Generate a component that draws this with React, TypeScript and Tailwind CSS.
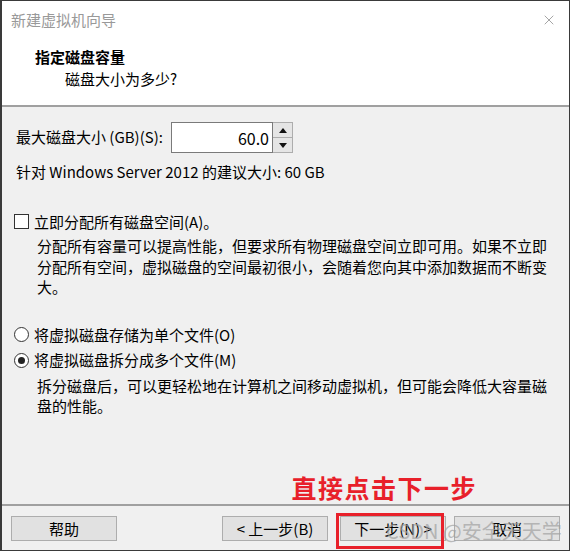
import { X } from 'lucide-react';

const font = { fontFamily: '"Noto Sans CJK SC", "Noto Sans", sans-serif' };

function WinButton({ label }: { label: string }) {
  return (
    <button className="w-[106px] h-[25px] bg-[#e1e1e1] border border-[#adadad] text-[15px] leading-none text-black flex items-center justify-center">
      {label}
    </button>
  );
}

function Radio({ checked, label }: { checked?: boolean; label: string }) {
  return (
    <div className="flex items-center gap-[5px]">
      <span className="w-[15px] h-[15px] rounded-full border border-[#333] bg-white flex items-center justify-center">
        {checked && <span className="w-[7px] h-[7px] rounded-full bg-[#222]" />}
      </span>
      <span>{label}</span>
    </div>
  );
}

export default function App() {
  return (
    <div
      style={font}
      className="relative w-[570px] h-[551px] flex flex-col bg-[#f0f0f0] border border-l-2 border-[#3a3a3a] text-[15px] text-black overflow-hidden"
    >
      {/* title bar */}
      <div className="h-[38px] bg-white flex items-center justify-between pl-[9px] pr-[12px]">
        <span className="text-[#999] text-[15px]">新建虚拟机向导</span>
        <X className="w-[16px] h-[16px] text-[#777]" strokeWidth={1} />
      </div>

      {/* header */}
      <div className="h-[68px] bg-white border-b-2 border-[#a0a0a0] flex flex-col pl-[33px] pt-[7px]">
        <p className="font-bold leading-[22px]">指定磁盘容量</p>
        <p className="pl-[30px] leading-[22px]">磁盘大小为多少?</p>
      </div>

      {/* body */}
      <div className="flex-1 flex flex-col px-[12px] pt-[15px]">
        <div className="flex items-center">
          <span className="pl-[2px] w-[157px]">最大磁盘大小 (GB)(S):</span>
          <div className="flex h-[31px]">
            <div className="w-[102px] bg-white border border-[#7a7a7a] flex items-center justify-end pr-[3px] text-[16px]">60.0</div>
            <div className="w-[20px] flex flex-col border border-l-0 border-[#adadad]">
              <div className="flex-1 bg-[#e5e5e5] border-b border-[#adadad] flex items-center justify-center">
                <svg width="8" height="5" viewBox="0 0 8 5"><path d="M4 0 L8 5 L0 5 Z" fill="#111" /></svg>
              </div>
              <div className="flex-1 bg-[#e5e5e5] flex items-center justify-center">
                <svg width="8" height="5" viewBox="0 0 8 5"><path d="M0 0 L8 0 L4 5 Z" fill="#111" /></svg>
              </div>
            </div>
          </div>
        </div>
        <p className="pl-[2px] mt-[8px]">针对 Windows Server 2012 的建议大小: 60 GB</p>

        <div className="flex items-center gap-[5px] mt-[27px]">
          <span className="w-[15px] h-[15px] border border-[#333] bg-white" />
          <span>立即分配所有磁盘空间(A)。</span>
        </div>
        <p className="pl-[23px] pr-[10px] mt-[3px] leading-[20.5px]">
          分配所有容量可以提高性能，但要求所有物理磁盘空间立即可用。如果不立即分配所有空间，虚拟磁盘的空间最初很小，会随着您向其中添加数据而不断变大。
        </p>

        <div className="flex flex-col gap-[3px] mt-[26px]">
          <Radio label="将虚拟磁盘存储为单个文件(O)" />
          <Radio checked label="将虚拟磁盘拆分成多个文件(M)" />
        </div>
        <p className="pl-[23px] pr-[10px] mt-[4px] leading-[20.5px]">
          拆分磁盘后，可以更轻松地在计算机之间移动虚拟机，但可能会降低大容量磁盘的性能。
        </p>

        <div className="flex-1 flex items-end justify-end pr-[80px] pb-[0px]">
          <span className="text-[#e8202a] text-[25px] font-bold tracking-[1.5px] leading-[34px]">直接点击下一步</span>
        </div>
      </div>

      {/* footer */}
      <div className="h-[46px] border-t-2 border-[#a0a0a0] flex items-start pt-[10px] px-[9px]">
        <WinButton label="帮助" />
        <div className="flex-1" />
        <WinButton label="< 上一步(B)" />
        <div className="relative ml-[12px]">
          <WinButton label="下一步(N) >" />
          <div className="absolute -left-[4px] -top-[3px] w-[108px] h-[36px] border-[3px] border-[#e8202a]" />
        </div>
        <div className="ml-[8px]">
          <WinButton label="取消" />
        </div>
      </div>

      {/* watermark */}
      <span className="absolute left-[384px] top-[516px] text-[20px] leading-[28px] text-[#a0a0a0]/70 whitespace-nowrap">CSDN @安全天天学</span>
    </div>
  );
}
